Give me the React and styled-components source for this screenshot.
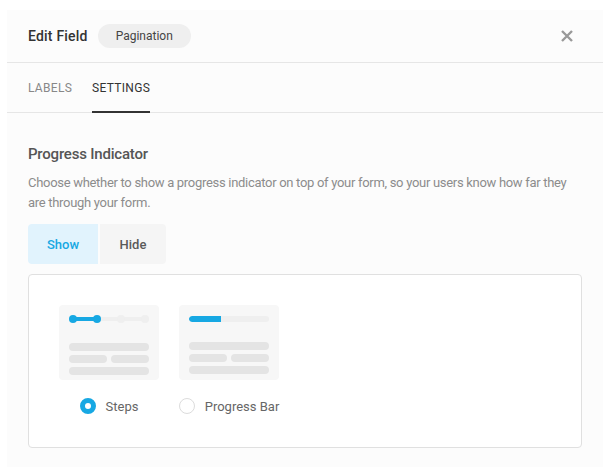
import styled, { createGlobalStyle } from "styled-components";

const Global = createGlobalStyle`
  html, body {
    margin: 0;
    background: #ffffff;
    font-family: Roboto, "Liberation Sans", sans-serif;
  }
`;

const Panel = styled.div`
  margin: 10px 7px 0;
  min-height: 457px;
  background: #fcfcfc;
`;

const Header = styled.div`
  display: flex;
  align-items: center;
  height: 52px;
  padding: 0 30px 0 21px;
  border-bottom: 1px solid #e6e6e6;
`;

const Title = styled.h2`
  margin: 0;
  font-size: 14px;
  font-weight: 500;
  letter-spacing: 0.2px;
  color: #333;
`;

const Pill = styled.span`
  margin-left: 10px;
  height: 24px;
  padding: 0 18px;
  display: flex;
  align-items: center;
  border-radius: 12px;
  background: #efefef;
  font-size: 12px;
  color: #444;
`;

const Close = styled.button`
  margin-left: auto;
  border: 0;
  padding: 0;
  background: none;
  display: flex;
  cursor: pointer;
`;

const Tabs = styled.div`
  display: flex;
  gap: 20px;
  height: 49px;
  padding: 0 21px;
  border-bottom: 1px solid #e6e6e6;
`;

const Tab = styled.div`
  display: flex;
  align-items: center;
  font-size: 12px;
  letter-spacing: 0.3px;
  text-transform: uppercase;
  color: ${(p) => (p.$active ? "#333" : "#888")};
  border-bottom: 2px solid ${(p) => (p.$active ? "#333" : "transparent")};
  padding-top: 2px;
  margin-bottom: -1px;
`;

const Body = styled.div`
  padding: 31px 21px 20px;
`;

const SectionTitle = styled.h3`
  margin: 0;
  font-size: 15px;
  line-height: 20px;
  font-weight: 500;
  letter-spacing: -0.2px;
  color: #555;
`;

const Description = styled.p`
  margin: 9px 0 0;
  font-size: 13px;
  line-height: 19.5px;
  letter-spacing: -0.3px;
  color: #8c8c8c;
`;

const Segmented = styled.div`
  display: flex;
  gap: 2px;
  margin-top: 12px;
`;

const Segment = styled.button`
  height: 40px;
  width: ${(p) => p.$w}px;
  border: 0;
  border-radius: ${(p) => (p.$first ? "4px 0 0 4px" : "0 4px 4px 0")};
  font-family: inherit;
  font-size: 13px;
  font-weight: 500;
  background: ${(p) => (p.$active ? "#e1f3fd" : "#f5f5f5")};
  color: ${(p) => (p.$active ? "#17a8e3" : "#5a5a5a")};
`;

const OptionsBox = styled.div`
  margin-top: 10px;
  height: 174px;
  box-sizing: border-box;
  padding: 30px 30px;
  display: flex;
  gap: 20px;
  background: #fff;
  border: 1px solid #e0e0e0;
  border-radius: 4px;
`;

const Option = styled.div`
  width: 100px;
  display: flex;
  flex-direction: column;
  align-items: center;
`;

const Preview = styled.div`
  width: 100px;
  height: 75px;
  box-sizing: border-box;
  padding: 10px 10px 0;
  background: #f7f7f7;
  border-radius: 4px;
`;

const StepsTrack = styled.div`
  position: relative;
  height: 8px;
`;

const StepsLine = styled.div`
  position: absolute;
  top: 2px;
  left: 3px;
  right: 0;
  height: 4px;
  border-radius: 2px;
  background: ${(p) => (p.$blue ? "#17a8e3" : "#efefef")};
  ${(p) => p.$blue && "right: auto; width: 24px;"}
`;

const Dot = styled.span`
  position: absolute;
  top: 0;
  left: ${(p) => p.$x}px;
  width: 8px;
  height: 8px;
  border-radius: 50%;
  background: ${(p) => (p.$blue ? "#17a8e3" : "#efefef")};
`;

const BarTrack = styled.div`
  height: 6px;
  margin: 1px 0;
  border-radius: 3px;
  background: #efefef;
  overflow: hidden;
`;

const BarFill = styled.div`
  width: 32px;
  height: 100%;
  border-radius: 3px 0 0 3px;
  background: #17a8e3;
`;

const Lines = styled.div`
  margin-top: 20px;
  display: grid;
  grid-template-columns: 1fr 1fr;
  gap: 4px;
`;

const Line = styled.div`
  height: 8px;
  border-radius: 4px;
  background: #e4e4e4;
  grid-column: ${(p) => (p.$full ? "1 / -1" : "auto")};
`;

const RadioRow = styled.label`
  margin-top: 18px;
  display: flex;
  align-items: center;
  gap: 10px;
  white-space: nowrap;
  font-size: 13px;
  color: #666;
`;

const Radio = styled.span`
  width: 16px;
  height: 16px;
  box-sizing: border-box;
  border-radius: 50%;
  border: ${(p) => (p.$checked ? "5px solid #17a8e3" : "1px solid #dcdcdc")};
  background: #fff;
`;

function PreviewLines() {
  return (
    <Lines>
      <Line $full />
      <Line />
      <Line />
      <Line $full />
    </Lines>
  );
}

export default function App() {
  return (
    <>
      <Global />
      <Panel>
        <Header>
          <Title>Edit Field</Title>
          <Pill>Pagination</Pill>
          <Close aria-label="Close">
            <svg width="12" height="12" viewBox="0 0 12 12">
              <path d="M1 1L11 11M11 1L1 11" stroke="#999" strokeWidth="2.4" />
            </svg>
          </Close>
        </Header>
        <Tabs>
          <Tab>Labels</Tab>
          <Tab $active>Settings</Tab>
        </Tabs>
        <Body>
          <SectionTitle>Progress Indicator</SectionTitle>
          <Description>
            Choose whether to show a progress indicator on top of your form, so your users know how far they
            are through your form.
          </Description>
          <Segmented>
            <Segment $first $active $w={70}>Show</Segment>
            <Segment $w={66}>Hide</Segment>
          </Segmented>
          <OptionsBox>
            <Option>
              <Preview>
                <StepsTrack>
                  <StepsLine />
                  <StepsLine $blue />
                  <Dot $x={0} $blue />
                  <Dot $x={24} $blue />
                  <Dot $x={48} />
                  <Dot $x={72} />
                </StepsTrack>
                <PreviewLines />
              </Preview>
              <RadioRow>
                <Radio $checked />
                Steps
              </RadioRow>
            </Option>
            <Option>
              <Preview>
                <BarTrack>
                  <BarFill />
                </BarTrack>
                <PreviewLines />
              </Preview>
              <RadioRow>
                <Radio />
                Progress Bar
              </RadioRow>
            </Option>
          </OptionsBox>
        </Body>
      </Panel>
    </>
  );
}
